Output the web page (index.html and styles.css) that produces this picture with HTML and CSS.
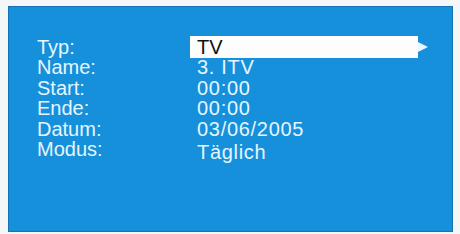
FILE: index.html
```html
<!DOCTYPE html>
<html lang="de">
<head>
    <meta charset="UTF-8">
    <title>Timer</title>
    <link rel="stylesheet" href="styles.css">
</head>
<body>
    <div class="panel">
        <div class="row">
            <span class="label">Typ:</span>
            <span class="value selected">TV</span>
            <span class="arrow"></span>
        </div>
        <div class="row">
            <span class="label">Name:</span>
            <span class="value">3. ITV</span>
        </div>
        <div class="row">
            <span class="label">Start:</span>
            <span class="value">00:00</span>
        </div>
        <div class="row">
            <span class="label">Ende:</span>
            <span class="value">00:00</span>
        </div>
        <div class="row">
            <span class="label">Datum:</span>
            <span class="value">03/06/2005</span>
        </div>
        <div class="row modus">
            <span class="label">Modus:</span>
            <span class="value">Täglich</span>
        </div>
    </div>
</body>
</html>
```

FILE: styles.css
```css
body {
    margin: 0;
    background: #f4f7f8;
    font-family: "Liberation Sans", Arial, sans-serif;
}
.panel {
    margin: 6px 0 0 8px;
    width: 445px;
    height: 226px;
    box-sizing: border-box;
    background: #1690da;
    border: 1px solid #1473b4;
    padding: 29px 0 0 28px;
    color: #e6f6ff;
}
.row {
    display: flex;
    align-items: center;
    height: 20.5px;
    line-height: 20px;
    font-size: 20px;
}
.label {
    width: 153px;
}
.value {
    padding-left: 7px;
    letter-spacing: 0.7px;
}
.selected {
    width: 221px;
    height: 22px;
    line-height: 22px;
    background: #fdfdfd;
    color: #111;
    letter-spacing: 0;
}
.arrow {
    width: 0;
    height: 0;
    border-top: 5px solid transparent;
    border-bottom: 5px solid transparent;
    border-left: 10px solid #e8f6ff;
}
.row:first-child {
    height: 21px;
}
.modus .value {
    margin-top: 5px;
}
```
